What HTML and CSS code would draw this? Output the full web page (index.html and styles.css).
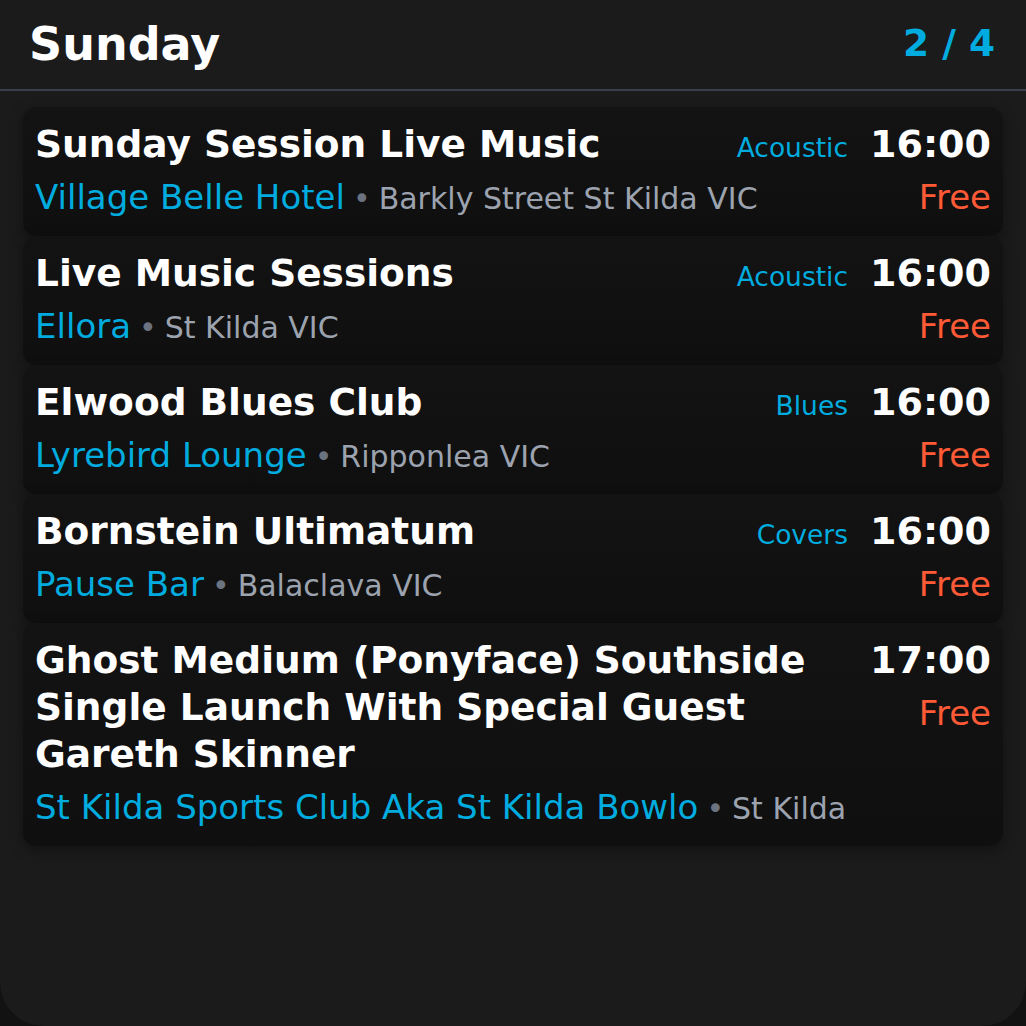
FILE: index.html
```html
<!DOCTYPE html>
<html>
<head>
<meta charset="utf-8">
<link rel="stylesheet" href="styles.css">
</head>
<body>
<div class="panel">
  <header class="top">
    <h1 class="day">Sunday</h1>
    <div class="page">2 / 4</div>
  </header>
  <div class="list">
    <div class="card">
      <div class="main">
        <div class="row1"><span class="title">Sunday Session Live Music</span><span class="genre">Acoustic</span></div>
        <div class="row2"><span class="venue">Village Belle Hotel</span><span class="dot">•</span><span class="loc">Barkly Street St Kilda VIC</span></div>
      </div>
      <div class="side"><div class="time">16:00</div><div class="price">Free</div></div>
    </div>
    <div class="card">
      <div class="main">
        <div class="row1"><span class="title">Live Music Sessions</span><span class="genre">Acoustic</span></div>
        <div class="row2"><span class="venue">Ellora</span><span class="dot">•</span><span class="loc">St Kilda VIC</span></div>
      </div>
      <div class="side"><div class="time">16:00</div><div class="price">Free</div></div>
    </div>
    <div class="card">
      <div class="main">
        <div class="row1"><span class="title">Elwood Blues Club</span><span class="genre">Blues</span></div>
        <div class="row2"><span class="venue">Lyrebird Lounge</span><span class="dot">•</span><span class="loc">Ripponlea VIC</span></div>
      </div>
      <div class="side"><div class="time">16:00</div><div class="price">Free</div></div>
    </div>
    <div class="card">
      <div class="main">
        <div class="row1"><span class="title">Bornstein Ultimatum</span><span class="genre">Covers</span></div>
        <div class="row2"><span class="venue">Pause Bar</span><span class="dot">•</span><span class="loc">Balaclava VIC</span></div>
      </div>
      <div class="side"><div class="time">16:00</div><div class="price">Free</div></div>
    </div>
    <div class="card">
      <div class="main">
        <div class="row1"><span class="title">Ghost Medium (Ponyface) Southside Single Launch With Special Guest Gareth Skinner</span></div>
        <div class="row2"><span class="venue">St Kilda Sports Club Aka St Kilda Bowlo</span><span class="dot">•</span><span class="loc">St Kilda</span></div>
      </div>
      <div class="side"><div class="time">17:00</div><div class="price">Free</div></div>
    </div>
  </div>
</div>
</body>
</html>
```

FILE: styles.css
```css
* { box-sizing: border-box; }
html, body {
  margin: 0;
  padding: 0;
  background: #121212;
  font-family: "DejaVu Sans", sans-serif;
}
.panel {
  width: 1026px;
  height: 1026px;
  background: #1b1b1b;
  border-radius: 0 0 44px 44px;
  overflow: hidden;
}
.top {
  display: flex;
  justify-content: space-between;
  align-items: center;
  height: 91px;
  padding: 0 31px 2px 29px;
  border-bottom: 2px solid #383e4a;
}
.day {
  margin: 0;
  font-size: 46px;
  font-weight: bold;
  color: #ffffff;
  line-height: 1;
}
.page {
  font-size: 37.5px;
  font-weight: bold;
  color: #00acdf;
  line-height: 1;
}
.list {
  margin: 16px 23px 0;
  display: flex;
  flex-direction: column;
}
.card {
  display: flex;
  gap: 22px;
  padding: 14px 12px 16px 12px;
  background: linear-gradient(#131313, #0f0f0f);
  border-radius: 13px;
  box-shadow: 0 4px 14px rgba(0, 0, 0, 0.35);
}
.main {
  flex: 1;
  min-width: 0;
}
.row1 {
  display: flex;
  align-items: baseline;
  justify-content: space-between;
  gap: 20px;
}
.title {
  font-size: 37.5px;
  font-weight: bold;
  color: #ffffff;
  line-height: 47px;
}
.genre {
  font-size: 26.5px;
  color: #00acdf;
  white-space: nowrap;
}
.row2 {
  margin-top: 8px;
  white-space: nowrap;
  font-size: 30px;
  line-height: 42px;
}
.venue {
  font-size: 34px;
  color: #00acdf;
}
.dot {
  font-size: 30px;
  color: #6b7280;
  margin: 0 8px;
}
.loc {
  font-size: 30px;
  color: #9ca3af;
}
.side {
  display: flex;
  flex-direction: column;
  align-items: flex-end;
}
.time {
  font-size: 38px;
  font-weight: bold;
  color: #ffffff;
  line-height: 47px;
}
.price {
  font-size: 34px;
  color: #ff5a36;
  line-height: 45px;
  margin-top: 7px;
}
```
